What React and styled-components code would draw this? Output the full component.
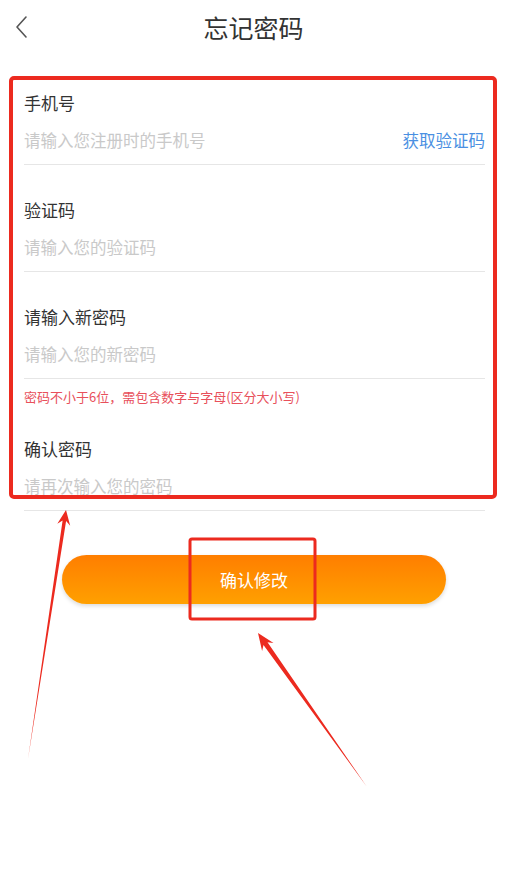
import React from "react";
import styled, { createGlobalStyle } from "styled-components";

const GlobalStyle = createGlobalStyle`
    html, body {
        margin: 0;
        padding: 0;
        background: #fff;
    }
    body {
        font-family: "Noto Sans CJK SC", "Noto Sans", sans-serif;
    }
`

const Page = styled.div`
    position: relative;
    width: 511px;
    height: 895px;
    overflow: hidden;
    background: #fff;
`

const NavBar = styled.div`
    position: relative;
    height: 58px;
    display: flex;
    align-items: flex-start;
    justify-content: center;
`

const BackButton = styled.div`
    position: absolute;
    left: 12px;
    top: 14px;
    width: 18px;
    height: 26px;
    display: flex;
    align-items: center;
    justify-content: center;
`

const Title = styled.h1`
    margin: 12px 4px 0 0;
    font-size: 25px;
    line-height: 30px;
    font-weight: 400;
    color: #333;
`

const Form = styled.div`
    padding: 0 26px 0 24px;
`

const Field = styled.div`
    padding-top: ${props => props.$top || 33}px;
    padding-bottom: 12px;
    border-bottom: 1px solid #e6e6e6;
`

const Label = styled.div`
    font-size: 17px;
    line-height: 24px;
    color: #333;
`

const InputRow = styled.div`
    margin-top: 13px;
    display: flex;
    align-items: center;
    justify-content: space-between;
`

const Placeholder = styled.div`
    font-size: 16.5px;
    line-height: 24px;
    color: #c9c9c9;
`

const CodeLink = styled.div`
    font-size: 16.5px;
    line-height: 24px;
    color: #4a90e2;
`

const Hint = styled.div`
    margin-top: 10px;
    font-size: 13px;
    line-height: 16px;
    color: #e8505b;
`

const SubmitButton = styled.div`
    margin: 44px 0 0 62px;
    width: 384px;
    height: 49px;
    border-radius: 25px;
    background: linear-gradient(180deg, #ff7e00 0%, #ffa000 100%);
    box-shadow: 0 2px 4px rgba(0, 0, 0, 0.15);
    display: flex;
    align-items: center;
    justify-content: center;
    font-size: 17px;
    color: #fff;
`

const Annotations = styled.svg`
    position: absolute;
    left: 0;
    top: 0;
    pointer-events: none;
`

const FormField = ({ label, placeholder, action, top }) => (
    <Field $top={top}>
        <Label>{label}</Label>
        <InputRow>
            <Placeholder>{placeholder}</Placeholder>
            {action && <CodeLink>{action}</CodeLink>}
        </InputRow>
    </Field>
)

const RED = "#ec2a1f"

export default function App() {
    return (
        <Page>
            <GlobalStyle />
            <NavBar>
                <BackButton>
                    <svg width="14" height="24" viewBox="0 0 14 24">
                        <path d="M12 2 L3 12 L12 22" fill="none" stroke="#555" strokeWidth="1.6" strokeLinecap="round" strokeLinejoin="round" />
                    </svg>
                </BackButton>
                <Title>忘记密码</Title>
            </NavBar>
            <Form>
                <FormField label="手机号" placeholder="请输入您注册时的手机号" action="获取验证码" />
                <FormField label="验证码" placeholder="请输入您的验证码" />
                <FormField label="请输入新密码" placeholder="请输入您的新密码" />
                <Hint>密码不小于6位，需包含数字与字母(区分大小写)</Hint>
                <FormField label="确认密码" placeholder="请再次输入您的密码" top={32} />
            </Form>
            <SubmitButton>确认修改</SubmitButton>

            <Annotations width="511" height="895" viewBox="0 0 511 895">
                <rect x="11" y="78" width="484" height="419" rx="3" fill="none" stroke={RED} strokeWidth="4" />
                <rect x="190" y="539" width="125" height="80" rx="2" fill="none" stroke={RED} strokeWidth="3" />
                <polygon fill={RED} points="28,759 66.1,521.1 70.2,525.8 66,510 57.3,523.8 62.6,520.6" />
                <polygon fill={RED} points="367,787 267.5,642.2 273.5,642.9 258,633 262.1,651 263.5,645" />
            </Annotations>
        </Page>
    )
}
